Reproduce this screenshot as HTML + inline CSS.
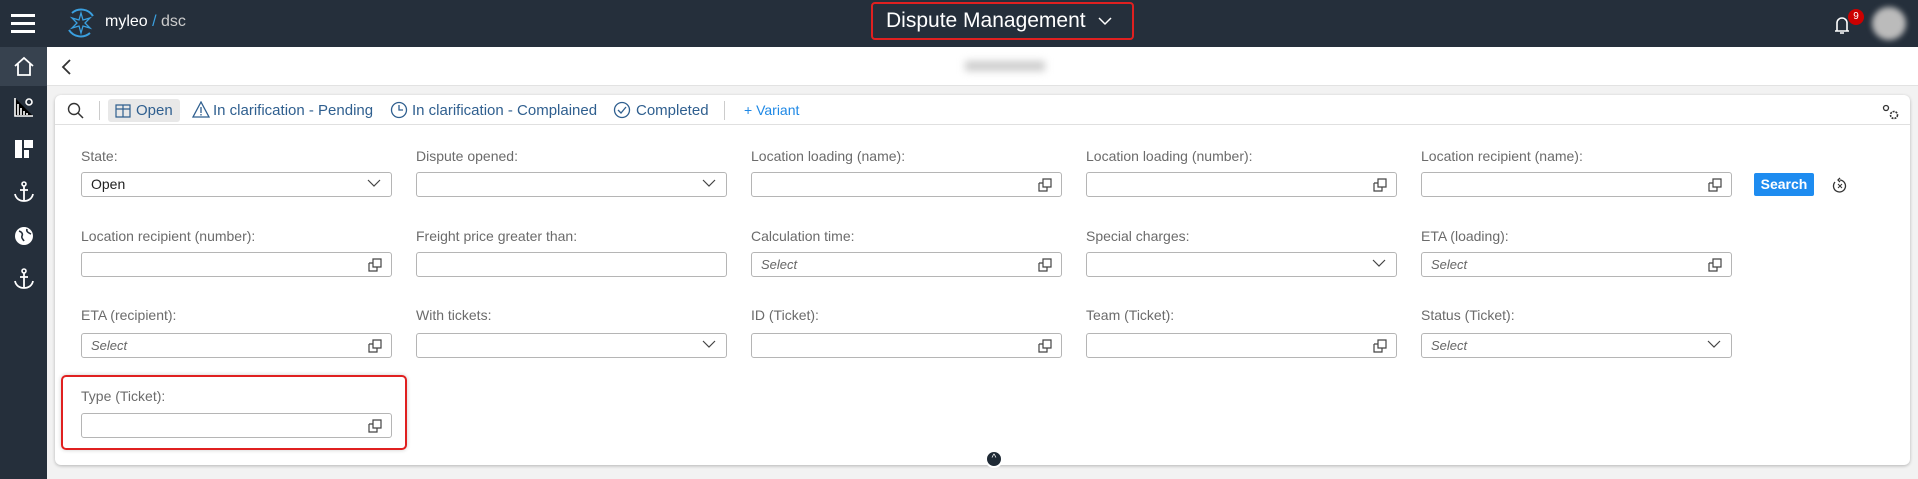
<!DOCTYPE html>
<html><head><meta charset="utf-8"><style>
*{box-sizing:border-box;margin:0;padding:0}
body{width:1918px;height:479px;overflow:hidden;background:#f2f2f2;font-family:"Liberation Sans",sans-serif;position:relative}
.top{position:absolute;left:0;top:0;width:1918px;height:47px;background:#252f3b}
.side{position:absolute;left:0;top:47px;width:47px;height:432px;background:#252f3b}
.hdr{position:absolute;left:47px;top:47px;right:0;height:39px;background:#fff;border-bottom:1px solid #e2e2e2}
.card{position:absolute;left:55px;top:95px;width:1855px;height:370px;background:#fff;border-radius:6px;box-shadow:0 1px 3px rgba(0,0,0,.25)}
.tb{position:absolute;left:0;top:0;right:0;height:30px;border-bottom:1px solid #e0e0e0}
.ti{position:absolute;top:7px;font-size:15px;color:#2f5f8f;white-space:nowrap}
.lbl{position:absolute;font-size:14px;color:#6b6b6b}
.in{position:absolute;width:311px;height:25px;border:1px solid #b5b5b5;border-radius:3px;background:#fff}
.in i{position:absolute;left:9px;top:4px;font-size:13px;color:#666}
.in span{position:absolute;left:9px;top:3px;font-size:14px;color:#222}
.cp{position:absolute;right:9px;top:5px}
.dd{position:absolute;right:10px;top:6px}
</style></head><body>
<div class="top">
 <div style="position:absolute;left:11px;top:14px;width:24px;height:3px;background:#fff;box-shadow:0 8px 0 #fff,0 16px 0 #fff"></div>
 <svg style="position:absolute;left:63px;top:5px" width="36" height="36" viewBox="0 0 36 36"><path d="M9 8a14 14 0 0 1 21 3M27 28a14 14 0 0 1-21-3" stroke="#3aa0e0" stroke-width="2" fill="none"/><path d="M18 8l2 7 7-2-5 5 5 5-7-2-2 7-2-7-7 2 5-5-5-5 7 2z" stroke="#3aa0e0" stroke-width="1.3" fill="none"/></svg>
 <div style="position:absolute;left:105px;top:13px;font-size:16px;color:#fff">myleo<span style="color:#3aa0e0"> / </span><span style="color:#ccc">dsc</span></div>
 <div style="position:absolute;left:871px;top:2px;width:263px;height:38px;border:2px solid #e02020;border-radius:4px"></div>
 <div style="position:absolute;left:886px;top:9px;font-size:21px;color:#fff">Dispute Management</div>
 <svg style="position:absolute;left:1098px;top:17px" width="14" height="9"><path d="M1 1l6 6 6-6" stroke="#fff" stroke-width="1.5" fill="none"/></svg>
 <svg style="position:absolute;left:1830px;top:12px" width="24" height="24"><path d="M5 19h14M7 19v-8a5 5 0 0 1 10 0v8M10 21h4" stroke="#fff" stroke-width="1.6" fill="none"/></svg>
 <div style="position:absolute;left:1848px;top:9px;width:16px;height:16px;border-radius:50%;background:#c00;color:#fff;font-size:10px;text-align:center;line-height:16px">9</div>
 <div style="position:absolute;left:1872px;top:7px;width:34px;height:33px;border-radius:50%;background:#bbb;filter:blur(3px)"></div>
</div>
<div class="side">
 <div style="position:absolute;left:0;top:0;width:47px;height:39px;background:#37424f"></div>
 <svg style="position:absolute;left:12px;top:7px" width="24" height="24"><path d="M3 12l9-8 9 8M6 10v11h12V10" stroke="#fff" stroke-width="1.8" fill="none"/></svg>
 <svg style="position:absolute;left:13px;top:49px" width="22" height="22"><path d="M2 2v18h18M5 19V8M8 19v-7M11 19v-4M14 19v-2" stroke="#fff" stroke-width="1.6"/><circle cx="16" cy="6" r="3" stroke="#fff" stroke-width="1.6" fill="none"/></svg>
 <svg style="position:absolute;left:14px;top:92px" width="20" height="20"><path d="M1 1h7v18H1zM10 1h9v8h-9zM10 11h5v8h-5z" fill="#fff"/></svg>
 <svg style="position:absolute;left:12px;top:133px" width="24" height="24"><circle cx="12" cy="4" r="2" stroke="#fff" stroke-width="1.6" fill="none"/><path d="M12 6v15M8 10h8M3 14c1 5 5 7 9 7s8-2 9-7" stroke="#fff" stroke-width="1.8" fill="none"/></svg>
 <svg style="position:absolute;left:13px;top:178px" width="22" height="22"><circle cx="11" cy="11" r="9" fill="#fff"/><path d="M6 6c3 1 4 3 3 5s1 3 2 5M14 4c-1 3 2 4 4 5" stroke="#252f3b" stroke-width="1.6" fill="none"/></svg>
 <svg style="position:absolute;left:12px;top:220px" width="24" height="24"><circle cx="12" cy="4" r="2" stroke="#fff" stroke-width="1.6" fill="none"/><path d="M12 6v15M8 10h8M3 14c1 5 5 7 9 7s8-2 9-7" stroke="#fff" stroke-width="1.8" fill="none"/></svg>
</div>
<div class="hdr">
 <svg style="position:absolute;left:14px;top:12px" width="12" height="16"><path d="M9 1L2 8l7 7" stroke="#333" stroke-width="1.8" fill="none"/></svg>
 <div style="position:absolute;left:918px;top:14px;width:80px;height:10px;background:#ccc;filter:blur(4px)"></div>
</div>
<div class="card">
 <div class="tb">
  <svg style="position:absolute;left:12px;top:7px" width="18" height="18"><circle cx="7" cy="7" r="5.5" stroke="#333" stroke-width="1.4" fill="none"/><path d="M11 11l5 5" stroke="#333" stroke-width="1.5"/></svg>
  <div style="position:absolute;left:44px;top:6px;width:1px;height:19px;background:#ccc"></div>
  <div style="position:absolute;left:53px;top:4px;width:72px;height:23px;background:#e8e8e8;border-radius:3px"></div>
  <svg style="position:absolute;left:60px;top:9px" width="16" height="14"><path d="M1 1h14v12H1zM8 1v12M1 5h14" stroke="#2f5f8f" stroke-width="1.2" fill="none"/></svg>
  <div class="ti" style="left:81px">Open</div>
  <svg style="position:absolute;left:137px;top:6px" width="18" height="17"><path d="M9 1L1 16h16z M9 6v6M9 13v1.5" stroke="#2f5f8f" stroke-width="1.3" fill="none"/></svg>
  <div class="ti" style="left:158px">In clarification - Pending</div>
  <svg style="position:absolute;left:335px;top:6px" width="18" height="18"><circle cx="9" cy="9" r="7.5" stroke="#2f5f8f" stroke-width="1.3" fill="none"/><path d="M9 4v5h4" stroke="#2f5f8f" stroke-width="1.3" fill="none"/></svg>
  <div class="ti" style="left:357px">In clarification - Complained</div>
  <svg style="position:absolute;left:558px;top:6px" width="18" height="18"><circle cx="9" cy="9" r="7.5" stroke="#2f5f8f" stroke-width="1.3" fill="none"/><path d="M5 9l3 3 5-6" stroke="#2f5f8f" stroke-width="1.3" fill="none"/></svg>
  <div class="ti" style="left:581px">Completed</div>
  <div style="position:absolute;left:669px;top:6px;width:1px;height:19px;background:#ccc"></div>
  <div class="ti" style="left:689px;color:#1e88e5;font-size:14px">+ Variant</div>
  <svg style="position:absolute;left:1827px;top:9px" width="18" height="16"><circle cx="4" cy="4" r="2.5" stroke="#333" stroke-width="1.3" fill="none"/><circle cx="12" cy="11" r="3.5" stroke="#333" stroke-width="1.6" stroke-dasharray="2 1" fill="none"/></svg>
 </div>
</div>
<div id="f"></div>
<div style="position:absolute;left:61px;top:375px;width:346px;height:75px;border:2px solid #e02020;border-radius:5px;box-shadow:0 0 4px rgba(0,0,0,.2)"></div>
<div style="position:absolute;left:985px;top:450px;width:18px;height:18px;border-radius:50%;background:#1f2a35;border:2px solid #fff;color:#fff;font-size:10px;text-align:center;line-height:14px">^</div>
<script>
var cols=[81,416,751,1086,1421];
var rows=[[155,172],[235,252],[314,333],[395,413]];
var cp='<svg class="cp" width="14" height="14"><path d="M5 1h8v8H5zM1 5h4M1 5v8h8V9" stroke="#444" stroke-width="1.2" fill="none"/></svg>';
var dd='<svg class="dd" width="14" height="9"><path d="M1 1l6 6 6-6" stroke="#444" stroke-width="1.2" fill="none"/></svg>';
var F=[
["State:","dd","Open"],["Dispute opened:","dd"],["Location loading (name):","cp"],["Location loading (number):","cp"],["Location recipient (name):","cp"],
["Location recipient (number):","cp"],["Freight price greater than:",""],["Calculation time:","cp","S"],["Special charges:","dd"],["ETA (loading):","cp","S"],
["ETA (recipient):","cp","S"],["With tickets:","dd"],["ID (Ticket):","cp"],["Team (Ticket):","cp"],["Status (Ticket):","dd","S"],
["Type (Ticket):","cp"]];
var h='';
F.forEach(function(f,i){var r=rows[Math.floor(i/5)],x=cols[i%5];
h+='<div class="lbl" style="left:'+x+'px;top:'+(r[0]-7)+'px">'+f[0]+'</div>';
h+='<div class="in" style="left:'+x+'px;top:'+r[1]+'px">'+(f[2]=="S"?'<i>Select</i>':f[2]?'<span>'+f[2]+'</span>':'')+(f[1]=="cp"?cp:f[1]=="dd"?dd:'')+'</div>';});
h+='<div style="position:absolute;left:1754px;top:173px;width:60px;height:23px;background:#1e8cf0;border-radius:2px;color:#fff;font-weight:bold;font-size:14px;text-align:center;line-height:23px">Search</div>';
h+='<svg style="position:absolute;left:1832px;top:177px" width="16" height="16"><path d="M3 5a6 6 0 1 0 5-2" stroke="#333" stroke-width="1.3" fill="none"/><path d="M8 1l-2 2 2 2" stroke="#333" stroke-width="1.3" fill="none"/><path d="M6 7l4 4M10 7l-4 4" stroke="#333" stroke-width="1"/></svg>';
document.getElementById('f').innerHTML=h;
</script>
</body></html>
